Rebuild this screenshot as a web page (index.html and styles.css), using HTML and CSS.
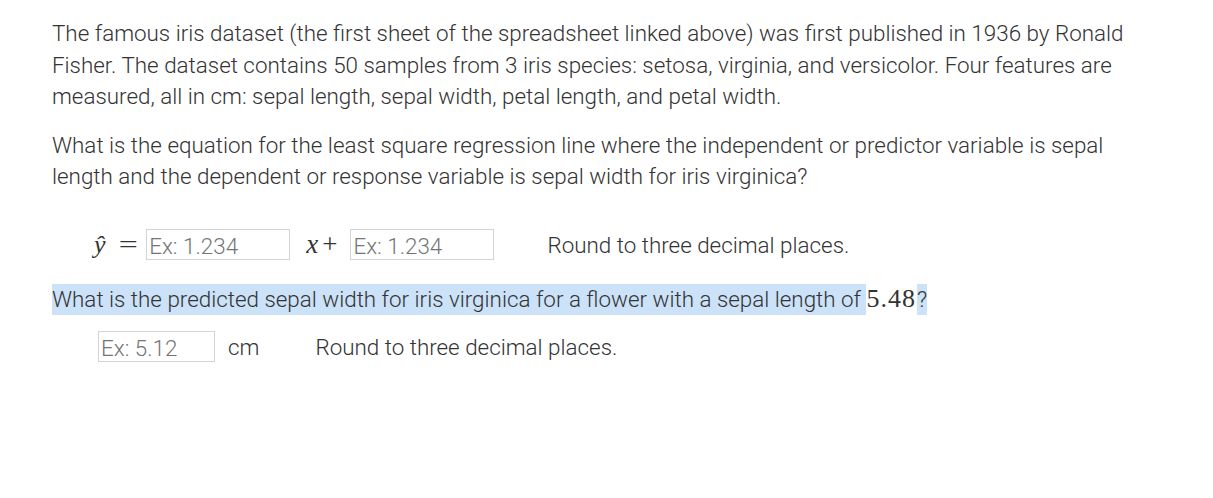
FILE: index.html
```html
<!DOCTYPE html>
<html>
<head>
<meta charset="utf-8">
<link rel="stylesheet" href="styles.css">
</head>
<body>
<div class="page">
  <p class="para">The famous iris dataset (the first sheet of the spreadsheet linked above) was first published in 1936 by Ronald Fisher. The dataset contains 50 samples from 3 iris species: setosa, virginia, and versicolor. Four features are measured, all in cm: sepal length, sepal width, petal length, and petal width.</p>
  <p class="para">What is the equation for the least square regression line where the independent or predictor variable is sepal length and the dependent or response variable is sepal width for iris virginica?</p>
  <div class="eq-row">
    <span class="math yhat">y&#770;</span>
    <span class="math eq">=</span>
    <input class="box box-wide" type="text" placeholder="Ex: 1.234">
    <span class="math xplus"><i>x</i>+</span>
    <input class="box box-wide" type="text" placeholder="Ex: 1.234">
    <span class="hint hint-eq">Round to three decimal places.</span>
  </div>
  <p class="para q3"><span class="sel">What is the predicted sepal width for iris virginica for a flower with a sepal length of </span><span class="math num">5.48</span><span class="sel">?</span></p>
  <div class="ans-row">
    <input class="box box-narrow" type="text" placeholder="Ex: 5.12">
    <span class="unit">cm</span>
    <span class="hint">Round to three decimal places.</span>
  </div>
</div>
</body>
</html>
```

FILE: styles.css
```css
* { box-sizing: border-box; }
html, body { margin: 0; padding: 0; background: #fff; }
body {
  font-family: Roboto, "Liberation Sans", sans-serif;
  font-weight: 300;
  color: #333;
  font-size: 22.4px;
}
.page {
  padding: 18px 0 0 52px;
  width: 1140px;
}
.para {
  margin: 0 0 17px 0;
  line-height: 31.5px;
}
.eq-row {
  display: flex;
  align-items: center;
  padding-left: 42px;
  margin-top: 37px;
  height: 30px;
}
.math {
  font-family: "Liberation Serif", "DejaVu Serif", serif;
  font-weight: 400;
  color: #333;
}
.yhat { font-style: italic; font-size: 26px; margin-right: 15px; }
.eq { font-size: 26px; margin-right: 11px; transform: scaleX(1.3); }
.xplus { font-size: 27px; margin: 0 13px 0 16px; }
.xplus i { margin-right: 4px; }
.box {
  height: 31px;
  border: 1px solid #d4d4d4;
  font-family: Roboto, "Liberation Sans", sans-serif;
  font-weight: 300;
  font-size: 22.4px;
  padding: 2px 2px 0 2px;
  color: #333;
  outline: none;
  background: #fff;
}
.box::placeholder { color: #757575; }
.box-wide { width: 144px; }
.box-narrow { width: 117px; }
.hint-eq { margin-left: 53px; }
.q3 { margin-top: 23px; margin-bottom: 0; }
.sel { background: #cbe2f8; padding: 2px 0 3px; }
.num { font-size: 26px; letter-spacing: 1px; margin-right: 1px; }
.ans-row {
  display: flex;
  align-items: center;
  padding-left: 46px;
  margin-top: 16px;
  height: 31px;
}
.unit { margin-left: 13px; margin-right: 56px; }
```
